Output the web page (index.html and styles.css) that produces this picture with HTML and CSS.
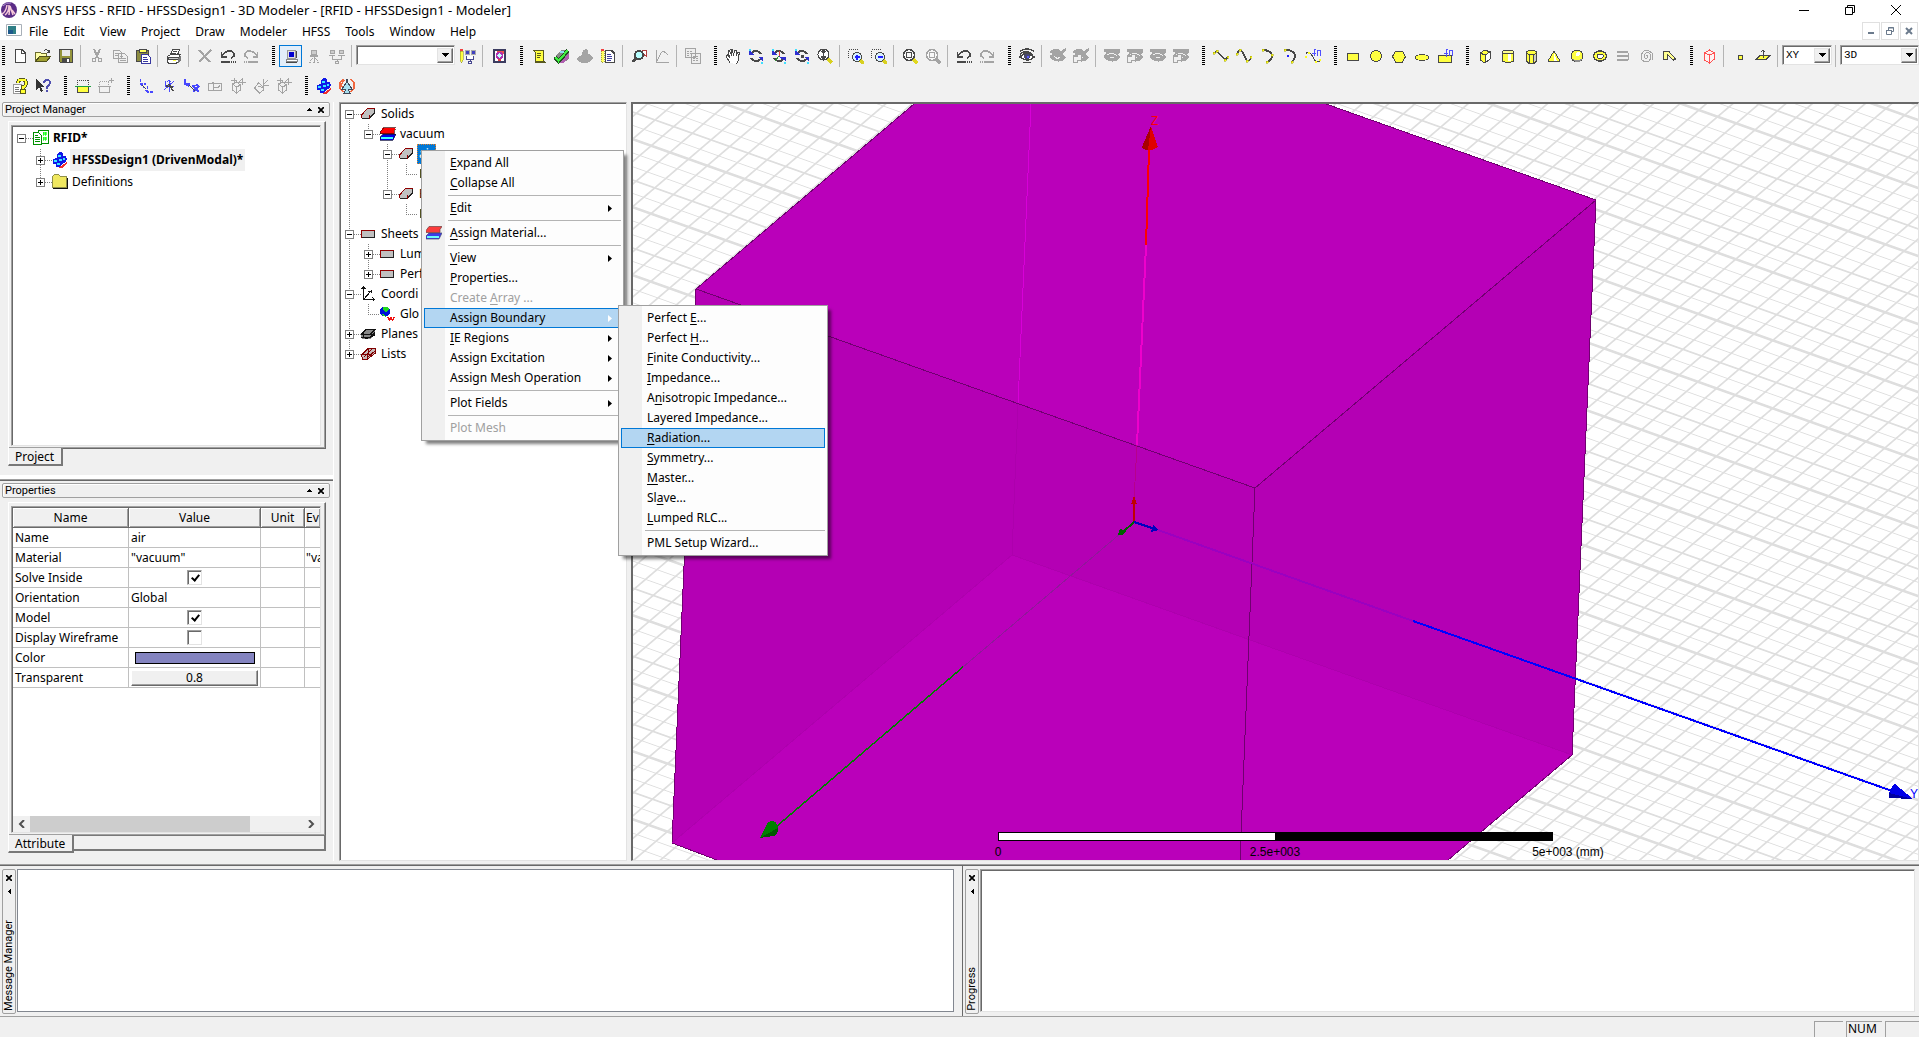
FILE: index.html
```html
<!DOCTYPE html>
<html lang="en">
<head>
<meta charset="utf-8">
<title>ANSYS HFSS - RFID - HFSSDesign1 - 3D Modeler</title>
<link rel="stylesheet" href="styles.css">
</head>
<body>
<svg class="sprite" aria-hidden="true">
  <symbol id="new" viewBox="0 0 16 16"><path d="M3 1.500h7l3 3v10h-10z" fill="#fff" stroke="#484848"/><path d="M9.500 1.500v3.500h3.500" fill="none" stroke="#484848"/></symbol>
  <symbol id="open" viewBox="0 0 16 16"><path d="M.500 13.500v-9h5l1 1h5v3" fill="#ffffa8" stroke="#6b6b30"/><path d="M.500 13.500l4-5h11l-4 5z" fill="#a0a030" stroke="#50501c"/><path d="M9 3q3-3 5 1m0-2v2.500h-2.500" fill="none" stroke="#484848"/></symbol>
  <symbol id="save" viewBox="0 0 16 16"><path d="M1.500 1.500h13v13h-12l-1-1z" fill="#94943c" stroke="#484848"/><path d="M4 2h8v6h-8z" fill="#e8e8e8"/><path d="M4 10h8v4h-8z" fill="#484848"/><path d="M9 11h2v3h-2z" fill="#fff"/></symbol>
  <symbol id="cut" viewBox="0 0 16 16"><path d="M5 1l4 9M11 1l-4 9" fill="none" stroke="currentColor" stroke-width="2"/><circle cx="5" cy="12" r="2" fill="none" stroke="currentColor"/><circle cx="11" cy="12" r="2" fill="none" stroke="currentColor"/></symbol>
  <symbol id="copy" viewBox="0 0 16 16"><path d="M1.500 2.500h6l2 2v6h-8zM6.500 5.500h6l3 3v6h-9z" fill="#f0f0f0" stroke="currentColor"/><path d="M3 5.500h3M3 7.500h3M8 8.500h3M8 10.500h6M8 12.500h6" stroke="currentColor"/></symbol>
  <symbol id="paste" viewBox="0 0 16 16"><path d="M1.500 2.500h12v11h-12z" fill="#8c8c40" stroke="#484848"/><path d="M4 1h7v3h-7z" fill="#ffff60" stroke="#484848"/><path d="M6.500 6.500h6l3 3v6h-9z" fill="#fff" stroke="#3838a0"/><path d="M8 9.500h4M8 11.500h5M8 13.500h5" stroke="#3838a0"/></symbol>
  <symbol id="print" viewBox="0 0 16 16"><path d="M4.500 7l2-5.500h7l-2 5.500M1.500 8.500l3-2h10l-2 3v4l-2 1.500h-8l-1-1z" fill="#fff" stroke="#484848"/><path d="M2 9.500h10v2h-10z" fill="#ccc" stroke="#484848"/><path d="M12 10l3-2v4l-3 3z" fill="#777"/><path d="M7 3.500h4M6 5.500h4" stroke="#484848"/><path d="M7 12.500h3" stroke="#ffff40"/></symbol>
  <symbol id="del" viewBox="0 0 16 16"><path d="M2 2l11 12M14 2l-12 12" stroke="currentColor" stroke-width="2"/></symbol>
  <symbol id="undo" viewBox="0 0 16 16"><path d="M1.500 4v5h5M2 8q4-6 9-5q4 2 3 5l-3 2.500" fill="none" stroke="currentColor" stroke-width="1.500"/><path d="M1 14h9" stroke="currentColor" stroke-width="2"/><path d="M11 14h5" stroke="currentColor" stroke-width="2" stroke-dasharray="1"/></symbol>
  <symbol id="redo" viewBox="0 0 16 16"><path d="M14.500 4v5h-5M14 8q-4-6-9-5q-4 2-3 5l3 2.500" fill="none" stroke="currentColor" stroke-width="1.500"/><path d="M6 14h9" stroke="currentColor" stroke-width="2"/><path d="M1 14h5" stroke="currentColor" stroke-width="2" stroke-dasharray="1"/></symbol>
  <symbol id="pc" viewBox="0 0 16 16"><path d="M4.500 2.500h8v8h-8z" fill="#e0e0e0" stroke="#999"/><path d="M6 4h5v5h-5z" fill="#0000d0"/><path d="M3 11.500h11v2h-11z" fill="#fff" stroke="#888"/><path d="M3 14.500h11M13.500 3v7" stroke="#484848"/></symbol>
  <symbol id="pcnet" viewBox="0 0 16 16"><path d="M5.500 2.500h5v4h-5z" fill="#ccc" stroke="currentColor"/><path d="M4 8h8" stroke="currentColor" stroke-width="2"/><path d="M8 9v5M4 13l3-3M12 13l-3-3M3 14.500h2M7 14.500h2M11 14.500h2" stroke="currentColor"/></symbol>
  <symbol id="pcs" viewBox="0 0 16 16"><path d="M1.500 2.500h4v3h-4zM10.500 2.500h4v3h-4z" fill="#ccc" stroke="currentColor"/><path d="M0 7.500h6M9 7.500h7M3.500 8v3h9v-3M8 11v2M6.500 13.500h3v2h-3z" fill="none" stroke="currentColor"/></symbol>
  <symbol id="pencilpc" viewBox="0 0 16 16"><path d="M0 3h3v9l-1.500 3-1.500-3z" fill="#ffff40" stroke="#80802c" stroke-width=".5"/><path d="M0 1h3v2h-3z" fill="#f04040"/><path d="M5 2h4v4h-4zM11 2h4v4h-4z" fill="#4040c0" stroke="#aaa"/><path d="M6.500 8v3h7v-3M10 11v2M8.500 13.500h3v2h-3z" fill="#fff" stroke="#484890"/></symbol>
  <symbol id="queue" viewBox="0 0 16 16"><path d="M3 2h11v12h-11z" fill="#fff" stroke="#3c3c60" stroke-width="2"/><path d="M5 3h8v3z" fill="#f05050"/><circle cx="8.500" cy="7.500" r="3" fill="#c0ffff" stroke="#b030b0" stroke-width="1.500"/><path d="M7 11h3v2h-3z" fill="#e04040"/></symbol>
  <symbol id="scroll" viewBox="0 0 16 16"><path d="M2 2h11l-1 2v8l2 2h-10v-10z" fill="#ffff40" stroke="#585820"/><path d="M6 5.500h4M6 7.500h4M6 9.500h3M5 13.500h8" stroke="#585820"/></symbol>
  <symbol id="check" viewBox="0 0 16 16"><path d="M2 8l5-6h6l2 3v6l-6 4-6-1z" fill="#888"/><path d="M9 11l6-5v4l-6 5h-4z" fill="#b060b0"/><path d="M6 3h6v2h-6z" fill="#90e0f0"/><path d="M1 9l3.500 4.500 9.500-11" fill="none" stroke="#205020" stroke-width="4"/><path d="M1.500 9l3 4 9-10.500" fill="none" stroke="#40f040" stroke-width="2"/></symbol>
  <symbol id="cloud" viewBox="0 0 16 16"><path d="M6 2l3-1 2 2v3l3 1 2 3-3 4-4 1h-4l-4-2-1-3 2-2 3-1z" fill="currentColor"/></symbol>
  <symbol id="notes" viewBox="0 0 16 16"><path d="M1 2h3v12h-3z" fill="#ffff60" stroke="#a0a040" stroke-dasharray="1"/><path d="M1 1h3v2h-3z" fill="#f04040"/><path d="M5.500 2.500h6l3 3v9h-9z" fill="#fff" stroke="#484848" stroke-width="1.500"/><path d="M7 6.500h4M7 8.500h5M7 10.500h5M7 12.500h4" stroke="#4040a0"/></symbol>
  <symbol id="lens" viewBox="0 0 16 16"><path d="M11 2h4v6l-3-2z" fill="#fff" stroke="#b04040"/><circle cx="8" cy="7" r="4" fill="#b8ffff" stroke="#484848" stroke-width="2"/><path d="M5 10l-3 4" stroke="#484848" stroke-width="3"/></symbol>
  <symbol id="plot" viewBox="0 0 16 16"><path d="M2.500 2v12.500h12M3 13l4-8q3-3 6 1l1 1" fill="none" stroke="currentColor"/></symbol>
  <symbol id="sheets" viewBox="0 0 16 16"><path d="M.500.500h10v9h-10zM6.500 5.500h9v10h-9z" fill="#eee" stroke="currentColor"/><path d="M2 3h6M2 5h4M2 7h3M8 8h6M8 10h6M8 12h6" stroke="currentColor" stroke-dasharray="2 1"/></symbol>
  <symbol id="hand" viewBox="0 0 16 16"><path d="M5 15l-4-7 1.500-1 2.500 3-2-7 1.500-.5 2 5-.5-6h1.500l1 6 1-5.500h1.500l0 6 2-4h1.500l-1 5v3l-2 4" fill="#fff" stroke="#484848"/></symbol>
  <symbol id="rot" viewBox="0 0 16 16"><path d="M4 5q4-5 9 1M12 11q-4 5-9-1" fill="none" stroke="#484848" stroke-width="2"/><path d="M1 2v5h5z" fill="#3030d0"/><path d="M15 14v-5h-5z" fill="#3030d0"/><path d="M1 2h2M13 14.500h2" stroke="#40e0ff" stroke-width="2"/></symbol>
  <symbol id="rotaxis" viewBox="0 0 16 16"><use href="#rot"/><path d="M8 3v5" stroke="#e04040"/><path d="M8 8l-4 5" stroke="#309030"/><path d="M8 8l5 4" stroke="#3030d0"/></symbol>
  <symbol id="rotdot" viewBox="0 0 16 16"><use href="#rot"/><path d="M7 7h3v3h-3z" fill="#484848"/></symbol>
  <symbol id="zoomud" viewBox="0 0 16 16"><circle cx="6.500" cy="6.500" r="5.500" fill="#fff" stroke="#484848"/><path d="M6.500 2.500v8M4.500 4.500l2-2 2 2M4.500 8.500l2 2 2-2" fill="none" stroke="#484848" stroke-width="1.500"/><path d="M11 11l4 4" stroke="#d8d020" stroke-width="3"/></symbol>
  <symbol id="zoomin" viewBox="0 0 16 16"><path d="M.500 9.500v-8h10" fill="none" stroke="#484848" stroke-dasharray="1"/><circle cx="9" cy="9" r="4.500" fill="#d8f0ff" stroke="#484848"/><path d="M6.500 9h5M9 6.500v5" stroke="#2020ff" stroke-width="2"/><path d="M12.500 12.500l3 3" stroke="#d8d020" stroke-width="3"/></symbol>
  <symbol id="zoomout" viewBox="0 0 16 16"><path d="M.500 9.500v-8h10" fill="none" stroke="#484848" stroke-dasharray="1"/><circle cx="9" cy="9" r="4.500" fill="#d8f0ff" stroke="#484848"/><path d="M6.500 9h5" stroke="#2020ff" stroke-width="2"/><path d="M12.500 12.500l3 3" stroke="#d8d020" stroke-width="3"/></symbol>
  <symbol id="fit" viewBox="0 0 16 16"><circle cx="7" cy="7" r="5.500" fill="#f8f8f8" stroke="currentColor" stroke-width="1.500"/><path d="M4.500 4.500h5v5h-5z" fill="none" stroke="currentColor"/><path d="M11.500 11.500l4 4" stroke="var(--handle)" stroke-width="3"/></symbol>
  <symbol id="eye" viewBox="0 0 16 16"><path d="M1 3q7-4 14 0M1 6q7-5 13 1" fill="none" stroke="#484848" stroke-width="1.500"/><path d="M1 9q6-7 14 0q-6 6-14 0z" fill="#fff" stroke="#484848" stroke-width="1.500"/><circle cx="8" cy="8.500" r="3" fill="#484870"/><path d="M8 8h2v2h-2z" fill="#6060ff"/><path d="M4 14h8" stroke="#484848"/></symbol>
  <symbol id="eyeoff" viewBox="0 0 16 16"><path d="M0 3q7-4 11 0l5-3v2l-4 4q4 2 4 4q-7 7-16 0v-3l3-1-3-1z" fill="currentColor"/><path d="M4 8q3 4 6 1" fill="none" stroke="#f0f0f0"/></symbol>
  <symbol id="eyeoff2" viewBox="0 0 16 16"><use href="#eyeoff"/><path d="M.500 8.500h4v-2h4v6h-4v2h-4z" fill="#f0f0f0" stroke="currentColor"/></symbol>
  <symbol id="eyeg" viewBox="0 0 16 16"><path d="M0 1h16v3l-2 2q2 2 2 4q-7 7-16 0v-3l3-2-3-1z" fill="currentColor"/><path d="M3 7q5-4 10 1M6 9h4" fill="none" stroke="#f0f0f0"/></symbol>
  <symbol id="eyeg2" viewBox="0 0 16 16"><use href="#eyeg"/><path d="M.500 8.500h4v-2h4v6h-4v2h-4z" fill="#f0f0f0" stroke="currentColor"/></symbol>
  <symbol id="line" viewBox="0 0 16 16"><path d="M1 5l3-2 8 9 3-3" fill="none" stroke="#484848" stroke-width="1.500"/><path d="M0 4h2v2h-2zM3 2h2v2h-2zM11 11h2v2h-2zM14 8h2v2h-2z" fill="#ffff20" stroke="#a0a000" stroke-width=".5"/></symbol>
  <symbol id="spline" viewBox="0 0 16 16"><path d="M1 6q3-7 6-1t4 8q3 0 4-4" fill="none" stroke="#484848" stroke-width="1.500"/><path d="M0 5h2v2h-2zM3 1h2v2h-2zM10 12h2v2h-2zM14 8h2v2h-2z" fill="#ffff20" stroke="#a0a000" stroke-width=".5"/></symbol>
  <symbol id="arc3" viewBox="0 0 16 16"><path d="M5 2q8 1 8 6 0 4-5 6" fill="none" stroke="#484848" stroke-width="2"/><path d="M3 1h2v2h-2zM12 6h2v2h-2zM7 13h2v2h-2z" fill="#ffff20" stroke="#a0a000" stroke-width=".5"/></symbol>
  <symbol id="arcc" viewBox="0 0 16 16"><path d="M4 2q9 0 9 7l-2 4" fill="none" stroke="#484848" stroke-width="2"/><path d="M2 1h2v2h-2zM9 13h2v2h-2z" fill="#ffff20" stroke="#a0a000" stroke-width=".5"/><path d="M5 7h2v2h-2z" fill="#2020ff"/></symbol>
  <symbol id="eqn" viewBox="0 0 16 16"><path d="M1 6q2-4 5 0l5 8 4-1" fill="none" stroke="#484848"/><path d="M0 8h2v2h-2zM3 4h2v2h-2zM10 13h2v2h-2zM14 11h2v2h-2z" fill="#ffff20"/><path d="M9 8v-6q0-1 2-1M7 5h4M12 8v-6h3v6" fill="none" stroke="#5050ff"/></symbol>
  <symbol id="rect" viewBox="0 0 16 16"><path d="M2.500 5.500h11v7h-11z" fill="#ffff40" stroke="#484848"/></symbol>
  <symbol id="circ" viewBox="0 0 16 16"><circle cx="8" cy="8" r="5.500" fill="#ffff40" stroke="#484848"/></symbol>
  <symbol id="hex" viewBox="0 0 16 16"><path d="M4.500 3.500h7l3 5-3 5.500h-7l-3-5.500z" fill="#ffff40" stroke="#484848"/></symbol>
  <symbol id="ell" viewBox="0 0 16 16"><ellipse cx="8" cy="9.500" rx="6.500" ry="3" fill="#ffff40" stroke="#484848"/></symbol>
  <symbol id="eqs" viewBox="0 0 16 16"><path d="M1.500 7.500h13v7h-13z" fill="#ffff40" stroke="#484848"/><path d="M9 9v-7q0-1 2-1M7 5h4M12 8v-6h3v6" fill="none" stroke="#5050ff"/></symbol>
  <symbol id="box" viewBox="0 0 16 16"><path d="M3 5l5-3 5 2v7l-5 4-5-3z" fill="#ffff40" stroke="#484848"/><path d="M8 7l5-3v7l-5 4z" fill="#fff" stroke="#484848"/><path d="M3 5l5 2" stroke="#484848"/></symbol>
  <symbol id="cyl" viewBox="0 0 16 16"><path d="M2.500 4v9q5.500 3 11 0v-9z" fill="#ffff40" stroke="#484848"/><path d="M8 6h3v7h-3z" fill="#fff"/><ellipse cx="8" cy="4" rx="5.500" ry="2" fill="#ffff90" stroke="#484848"/></symbol>
  <symbol id="prism" viewBox="0 0 16 16"><path d="M3.500 5v8l2 2h6l2-2v-8z" fill="#ffff40" stroke="#484848"/><path d="M6 7v8M10 7v8" stroke="#484848"/><path d="M10.500 7h2v6h-2z" fill="#ccc"/><ellipse cx="8.500" cy="4.500" rx="5" ry="2" fill="#ffff40" stroke="#484848"/></symbol>
  <symbol id="cone" viewBox="0 0 16 16"><path d="M8 3l6 10q-6 2-12 0z" fill="#ffff40" stroke="#484848"/><path d="M8 5l3 8h-3z" fill="#fff"/></symbol>
  <symbol id="ball" viewBox="0 0 16 16"><circle cx="8" cy="8" r="6" fill="#ffff40" stroke="#484848"/><circle cx="9" cy="6" r="2" fill="#fff"/><path d="M3 11q5 2 10 0l-3 3h-4z" fill="#909090"/></symbol>
  <symbol id="torus" viewBox="0 0 16 16"><ellipse cx="8" cy="8" rx="6.500" ry="5" fill="#ffff40" stroke="#484848" stroke-width="1.500"/><rect x="5" y="6" width="6" height="4" rx="1" fill="#fff" stroke="#484848"/></symbol>
  <symbol id="helix" viewBox="0 0 16 16"><path d="M2 4h11M2 8h12M2 12h11" stroke="currentColor" stroke-width="2.500"/><path d="M12 4l2 2-2 2M13 9l1 2-2 1" stroke="currentColor" fill="none"/></symbol>
  <symbol id="spiral" viewBox="0 0 16 16"><path d="M8 8q2-2 2 1-2 3-4 0 0-5 5-4 4 4 0 8-6 2-8-3 0-8 7-8l4 3v7" fill="none" stroke="currentColor"/></symbol>
  <symbol id="bond" viewBox="0 0 16 16"><path d="M2.500 11v-8h5l7 8-2 1-6-5v4z" fill="#ffff90" stroke="#484848"/></symbol>
  <symbol id="region" viewBox="0 0 16 16"><path d="M3.500 5l5-3 5 3v6l-5 4-5-3zM3.500 5l5 2 5-2M8.500 7v8" fill="#fff0f0" stroke="#ff5050"/></symbol>
  <symbol id="point" viewBox="0 0 16 16"><path d="M6 7h4v4h-4z" fill="#ffff40" stroke="#484848"/></symbol>
  <symbol id="plane" viewBox="0 0 16 16"><path d="M1 11.500l4-4h10l-4 4z" fill="#ffff40" stroke="#484848"/><path d="M8 10v-8M6 4l2-2 2 2" fill="none" stroke="#484848"/></symbol>
  <symbol id="help" viewBox="0 0 16 16"><path d="M1.500 6.500h8v9h-8z" fill="#fff" stroke="#999"/><path d="M3 9h4M3 11h4M3 13h5" stroke="#777"/><path d="M6 5q0-3.500 4-3.500t4 3.500-3 4v2M10 13h2v2h-2z" fill="none" stroke="#585820" stroke-width="3.500"/><path d="M6 5q0-3.500 4-3.500t4 3.500-3 4v2M10 13h2v1h-2z" fill="none" stroke="#ffff30" stroke-width="2"/></symbol>
  <symbol id="what" viewBox="0 0 16 16"><path d="M1 1v11l3-3 2 5 2-1-2-4h4z" fill="#333"/><path d="M9 5q0-3 3-3t3 2.500-3 4v2M12 12v2" fill="none" stroke="#5050b0" stroke-width="2"/></symbol>
  <symbol id="sect" viewBox="0 0 16 16"><path d="M2.500 7v-5h11v5" fill="none" stroke="#484848" stroke-dasharray="1"/><path d="M2.500 8.500h11v6h-11z" fill="#ffff40" stroke="#484848"/><path d="M0 8.500h16" stroke="#20a040"/></symbol>
  <symbol id="sectg" viewBox="0 0 16 16"><path d="M1.500 7v-4h9v4" fill="none" stroke="currentColor" stroke-dasharray="1"/><path d="M1.500 8.500h10v6h-10zM0 8.500h13M13.500 0v5M11 2.500h5" fill="none" stroke="currentColor"/></symbol>
  <symbol id="cs1" viewBox="0 0 16 16"><path d="M2.500 1v5h5M2.500 6l4 4M9.500 8v6h6M9.500 14l-3-3" fill="none" stroke="#4848ff" stroke-width="1.500" stroke-dasharray="3 1"/><path d="M4 7l4 4" stroke="#484848"/></symbol>
  <symbol id="cs2" viewBox="0 0 16 16"><path d="M8.500 2v12M4 3v5h9M3 12l10-9M6 4l2-2 2 2" fill="none" stroke="#4848ff"/><path d="M5 8l7 1M8 6l4 7" stroke="#484848" stroke-width="1.500"/></symbol>
  <symbol id="cs3" viewBox="0 0 16 16"><path d="M1 1v5h5M1 6l4 2M8 8l6-1M9 14l6-6M10 9l5 5" fill="none" stroke="#4848ff" stroke-width="1.500"/><path d="M5 7l6 6" stroke="#484848"/></symbol>
  <symbol id="csg" viewBox="0 0 16 16"><path d="M1.500 5.500h13v7h-13zM6.500 13v-9M6 9.500h5l2-2M4 6l2-2 2 2" fill="none" stroke="currentColor"/></symbol>
  <symbol id="csg2" viewBox="0 0 16 16"><path d="M2.500 6l4-2 4 3v5l-4 3-4-3zM2.500 6l4 3 4-2M6.500 9v6M8 5l4-4M12.500 0v7M9 4.500h7M4.500 0v4M1 2.500h6" fill="none" stroke="currentColor"/></symbol>
  <symbol id="csg3" viewBox="0 0 16 16"><path d="M1.500 10l4-5 5 4v3l-4 3zM5 8l6 2M10.500 1v6h6M10 7l5-5" fill="none" stroke="currentColor"/></symbol>
  <symbol id="cubes" viewBox="0 0 16 16"><path d="M9 14l6-4v2l-5 4h-4z" fill="#f03030"/><path d="M5 2l3-2 3 1v3l3 0 1 3-1 3-4 2-2 3h-4v-3h-3v-5l4-1z" fill="#1018e8"/><path d="M6 3h3v2h-3zM2 8h3v2h-3zM7 7h3v2h-3zM5 11h3v2h-3zM11 6h2v2h-2z" fill="#38e8ff"/></symbol>
  <symbol id="plane3" viewBox="0 0 16 16"><path d="M4 1l-3 4v5l3 4M12 1l3 4v5l-3 4M5 2l-3 5 3 5" fill="none" stroke="#f06840" stroke-width="1.500"/><path d="M8 1l1 4 4 6h-4l2 4h-6l2-4h-4l4-6z" fill="#a8e0f0" stroke="#404858"/></symbol>
  <symbol id="project" viewBox="0 0 16 16"><path d="M5 .500h10v13h-10z" fill="#fff" stroke="#009000"/><path d="M10 2h1v3h-1zM12 2h1v3h-1zM10 7h1v3h-1zM12 7h1v3h-1z" fill="#20ff20" stroke="#20ff20" stroke-width=".7"/><path d="M.500 2.500h5l3 3v9h-8z" fill="#fff" stroke="#009000"/><path d="M2 5.500h3M2 7.500h5M2 9.500h5M2 11.500h5" stroke="#009000"/></symbol>
  <symbol id="folder" viewBox="0 0 16 16"><path d="M.500 13.500v-11l2-2h4l2 2h6v11z" fill="#f0e860" stroke="#909048"/><path d="M1 14.500h14.500v-11" fill="none" stroke="#111"/></symbol>
  <symbol id="solid" viewBox="0 0 16 16"><path d="M.500 9.500l6-6.500h7v4l-5.500 5.500h-7.500z" fill="#c0c0c0"/><path d="M.500 12.500h7.500l5.500-5.500v-4.500" fill="none" stroke="#222"/><path d="M.500 12v-3l6-6.500h7M8.500 9v3.500" fill="none" stroke="#900000"/></symbol>
  <symbol id="mat" viewBox="0 0 16 16"><path d="M3 8h13l-2 4-1 2h-13v-3z" fill="#0000e8" stroke="#101040" stroke-width=".7"/><path d="M1 11h12v2h-12z" fill="#40ffff"/><path d="M3 1.500h13l-2 3v3h-14v-2z" fill="#ff0000" stroke="#400808" stroke-width=".7"/></symbol>
  <symbol id="sheet" viewBox="0 0 16 16"><path d="M.500 4.500h13v7h-13z" fill="#c0c0c0" stroke="#900000"/><path d="M13.500 5v6.500h-13" fill="none" stroke="#222"/></symbol>
  <symbol id="axes" viewBox="0 0 16 16"><path d="M2.500 1v12.500h11M3 13l7-8M.500 3l2-2 2 2M11.500 11.500l2 2-2 2M10 4v3M7 5.500h3" fill="none" stroke="#111"/></symbol>
  <symbol id="globe" viewBox="0 0 16 16"><circle cx="5" cy="5.500" r="5" fill="#0010d8"/><path d="M3 1h4l2 2-3 3-3-2zM2 8l3 1 1 2-3-1z" fill="#20d820"/><path d="M8 11l1.500 3 1.500-2 1.500 2 2-3" fill="none" stroke="#f01010" stroke-width="1.500"/></symbol>
  <symbol id="planes" viewBox="0 0 16 16"><path d="M0 8l5-5h9v6l-5 4h-8z" fill="#888"/><path d="M0 8.500h9l5-5h-9zM0 11.500h9l5-5M0 8l14 0M4 13l10-4M2.500 5v7" fill="none" stroke="#111"/></symbol>
  <symbol id="lists" viewBox="0 0 16 16"><path d="M.500 9l7-7h7v5l-8 6h-5z" fill="#c8b8b8" stroke="#800000"/><path d="M3 11l8-8M6 12l8-7M7.500 3v5l4 2M2 8.500h4v5" fill="none" stroke="#800000"/></symbol>
  <symbol id="cmd" viewBox="0 0 16 16"><path d="M2 3h12v9h-12z" fill="#505020"/></symbol>
  <symbol id="tri-up" viewBox="0 0 5 3"><path d="M2 0h1v1h1v1h1v1h-5v-1h1v-1h1z"/></symbol>
  <symbol id="tri-left" viewBox="0 0 3 5"><path d="M0 2h1v-1h1v-1h1v5h-1v-1h-1v-1h-1z"/></symbol>
  <symbol id="x" viewBox="0 0 7 7"><path d="M0 0l7 7M7 0l-7 7" stroke="#000" stroke-width="2"/></symbol>
  <symbol id="drop" viewBox="0 0 7 4"><path d="M0 0h7v1h-1v1h-1v1h-1v1h-1v-1h-1v-1h-1v-1h-1z"/></symbol>
  <symbol id="sub" viewBox="0 0 4 7"><path d="M0 0l4 3.500-4 3.500z"/></symbol>
</svg>

<header class="titlebar">
  <svg class="logo" viewBox="0 0 16 16"><circle cx="8" cy="8" r="8" fill="#5a2c86"/><path d="M1 12q4-2 5-9M4 13q4-3 4-10M8 13l1-9 3 9M11 8l3 4" fill="none" stroke="#f4c8d8" stroke-width="1.500"/><path d="M2 4q3-4 8-3" fill="none" stroke="#b090d0"/></svg>
  <h1>ANSYS HFSS - RFID - HFSSDesign1 - 3D Modeler - [RFID - HFSSDesign1 - Modeler]</h1>
  <div class="winbtns">
    <button aria-label="Minimize"><svg viewBox="0 0 12 12"><path d="M1 6.500h10" stroke="#000"/></svg></button>
    <button aria-label="Restore"><svg viewBox="0 0 12 12"><path d="M1.500 3.500h7v7h-7zM3.500 3v-1.500h7v7h-2" fill="none" stroke="#000"/></svg></button>
    <button aria-label="Close"><svg viewBox="0 0 12 12"><path d="M1 1l10 10M11 1l-10 10" stroke="#000"/></svg></button>
  </div>
</header>
<nav class="menubar" aria-label="Main menu">
  <svg class="docicon" viewBox="0 0 16 12"><path d="M.500.500h15v11h-15z" fill="#fff" stroke="#a8b0b8"/><path d="M2 2h8v8h-8z" fill="#2f7f86"/><path d="M2 6h5v4h-5z" fill="#1e5a8c"/></svg>
  <button>File</button><button>Edit</button><button>View</button><button>Project</button><button>Draw</button><button>Modeler</button><button>HFSS</button><button>Tools</button><button>Window</button><button>Help</button>
  <div class="mdibtns">
    <button aria-label="Minimize document"><svg viewBox="0 0 8 8"><path d="M1 6h6" stroke="#6b7a8c" stroke-width="2"/></svg></button>
    <button aria-label="Restore document"><svg viewBox="0 0 8 8"><path d="M.500 3.500h5v4h-5zM2.500 3v-2.500h5v4h-2M0 3.500h6M2 1h6" fill="none" stroke="#6b7a8c"/></svg></button>
    <button aria-label="Close document"><svg viewBox="0 0 8 8"><path d="M1 1l6 6M7 1l-6 6" stroke="#6b7a8c" stroke-width="2"/></svg></button>
  </div>
</nav>

<div class="toolbars">
  <div class="toolbar" role="toolbar" aria-label="Standard">
    <i class="grip first"></i>
    <button aria-label="New"><svg><use href="#new"/></svg></button><button aria-label="Open"><svg><use href="#open"/></svg></button><button aria-label="Save"><svg><use href="#save"/></svg></button>
    <i class="sep"></i>
    <button disabled aria-label="Cut"><svg><use href="#cut"/></svg></button><button disabled aria-label="Copy"><svg><use href="#copy"/></svg></button><button aria-label="Paste"><svg><use href="#paste"/></svg></button>
    <i class="sep"></i>
    <button aria-label="Print"><svg><use href="#print"/></svg></button>
    <i class="sep"></i>
    <button disabled aria-label="Delete"><svg><use href="#del"/></svg></button><button aria-label="Undo"><svg><use href="#undo"/></svg></button><button disabled aria-label="Redo"><svg><use href="#redo"/></svg></button>
    <i class="grip"></i>
    <button class="on" aria-label="Local machine"><svg><use href="#pc"/></svg></button><button disabled aria-label="Remote machine"><svg><use href="#pcnet"/></svg></button><button disabled aria-label="Distributed"><svg><use href="#pcs"/></svg></button>
    <i class="sep"></i>
    <div class="combo machines"><select aria-label="Machine list"><option></option></select><span><svg><use href="#drop"/></svg></span></div>
    <button aria-label="Edit machines"><svg><use href="#pencilpc"/></svg></button>
    <i class="sep"></i>
    <button aria-label="Queue"><svg><use href="#queue"/></svg></button>
    <i class="grip"></i>
    <button aria-label="Scripts"><svg><use href="#scroll"/></svg></button><button aria-label="Validate"><svg><use href="#check"/></svg></button><button disabled aria-label="Analyze"><svg><use href="#cloud"/></svg></button><button aria-label="Notes"><svg><use href="#notes"/></svg></button>
    <i class="sep"></i>
    <button aria-label="Solution data"><svg><use href="#lens"/></svg></button><button disabled aria-label="Report"><svg><use href="#plot"/></svg></button>
    <i class="sep"></i>
    <button disabled aria-label="Copy image"><svg><use href="#sheets"/></svg></button>
    <i class="grip"></i>
    <button aria-label="Pan"><svg><use href="#hand"/></svg></button><button aria-label="Rotate"><svg><use href="#rot"/></svg></button><button aria-label="Rotate about axis"><svg><use href="#rotaxis"/></svg></button><button aria-label="Rotate about center"><svg><use href="#rotdot"/></svg></button><button aria-label="Dynamic zoom"><svg><use href="#zoomud"/></svg></button>
    <i class="sep"></i>
    <button aria-label="Zoom in"><svg><use href="#zoomin"/></svg></button><button aria-label="Zoom out"><svg><use href="#zoomout"/></svg></button>
    <i class="sep"></i>
    <button aria-label="Fit all"><svg><use href="#fit"/></svg></button><button disabled aria-label="Fit selection"><svg><use href="#fit"/></svg></button>
    <i class="sep"></i>
    <button aria-label="Undo view"><svg><use href="#undo"/></svg></button><button disabled aria-label="Redo view"><svg><use href="#redo"/></svg></button>
    <i class="grip"></i>
    <button aria-label="Visibility"><svg><use href="#eye"/></svg></button>
    <i class="sep"></i>
    <button disabled aria-label="Hide"><svg><use href="#eyeoff"/></svg></button><button disabled aria-label="Hide in active view"><svg><use href="#eyeoff2"/></svg></button>
    <i class="sep"></i>
    <button disabled aria-label="Show"><svg><use href="#eyeg"/></svg></button><button disabled aria-label="Show in view"><svg><use href="#eyeg2"/></svg></button><button disabled aria-label="Show all"><svg><use href="#eyeg"/></svg></button><button disabled aria-label="Show all in view"><svg><use href="#eyeg2"/></svg></button>
    <i class="grip"></i>
    <button aria-label="Line"><svg><use href="#line"/></svg></button><button aria-label="Spline"><svg><use href="#spline"/></svg></button><button aria-label="Three point arc"><svg><use href="#arc3"/></svg></button><button aria-label="Center arc"><svg><use href="#arcc"/></svg></button><button aria-label="Equation curve"><svg><use href="#eqn"/></svg></button>
    <i class="grip"></i>
    <button aria-label="Rectangle"><svg><use href="#rect"/></svg></button><button aria-label="Circle"><svg><use href="#circ"/></svg></button><button aria-label="Polygon"><svg><use href="#hex"/></svg></button><button aria-label="Ellipse"><svg><use href="#ell"/></svg></button><button aria-label="Equation surface"><svg><use href="#eqs"/></svg></button>
    <i class="grip"></i>
    <button aria-label="Box"><svg><use href="#box"/></svg></button><button aria-label="Cylinder"><svg><use href="#cyl"/></svg></button><button aria-label="Polyhedron"><svg><use href="#prism"/></svg></button><button aria-label="Cone"><svg><use href="#cone"/></svg></button><button aria-label="Sphere"><svg><use href="#ball"/></svg></button><button aria-label="Torus"><svg><use href="#torus"/></svg></button><button disabled aria-label="Helix"><svg><use href="#helix"/></svg></button><button disabled aria-label="Spiral"><svg><use href="#spiral"/></svg></button><button aria-label="Bondwire"><svg><use href="#bond"/></svg></button>
    <i class="grip"></i>
    <button aria-label="Region"><svg><use href="#region"/></svg></button>
    <i class="sep"></i>
    <button aria-label="Point"><svg><use href="#point"/></svg></button><button aria-label="Plane"><svg><use href="#plane"/></svg></button>
    <i class="sep"></i>
    <div class="combo drawplane"><select aria-label="Drawing plane"><option>XY</option></select><span><svg><use href="#drop"/></svg></span></div>
    <i class="sep"></i>
    <div class="combo movement"><select aria-label="Movement mode"><option>3D</option></select><span><svg><use href="#drop"/></svg></span></div>
  </div>
  <div class="toolbar" role="toolbar" aria-label="Modeler">
    <i class="grip first"></i>
    <button aria-label="Help topics"><svg><use href="#help"/></svg></button><button aria-label="Context help"><svg><use href="#what"/></svg></button>
    <i class="grip"></i>
    <button aria-label="Section"><svg><use href="#sect"/></svg></button><button disabled aria-label="Add section"><svg><use href="#sectg"/></svg></button>
    <i class="grip"></i>
    <button aria-label="Offset CS"><svg><use href="#cs1"/></svg></button><button aria-label="Rotated CS"><svg><use href="#cs2"/></svg></button><button aria-label="Relative CS"><svg><use href="#cs3"/></svg></button><button disabled aria-label="Face CS"><svg><use href="#csg"/></svg></button><button disabled aria-label="Object CS"><svg><use href="#csg2"/></svg></button><button disabled aria-label="Object CS rotated"><svg><use href="#csg3"/></svg></button><button disabled aria-label="Object CS both"><svg><use href="#csg2"/></svg></button>
    <i class="grip"></i>
    <button aria-label="HFSS design"><svg><use href="#cubes"/></svg></button><button aria-label="HFSS-IE design"><svg><use href="#plane3"/></svg></button>
  </div>
</div>

<main class="workspace">
  <aside class="docks">
    <section class="panel project">
      <div class="caption"><h2>Project Manager</h2><button aria-label="Collapse project manager"><svg class="tri"><use href="#tri-up"/></svg></button><button aria-label="Close project manager"><svg class="x"><use href="#x"/></svg></button></div>
      <div class="tabframe">
        <div class="well">
          <ul class="tree roomy">
            <li><div class="row"><button class="exp open" aria-label="Collapse"></button><i class="dots"></i><svg><use href="#project"/></svg><span class="label strong">RFID*</span></div>
              <ul>
                <li><div class="row"><button class="exp" aria-label="Expand"></button><i class="dots"></i><svg><use href="#cubes"/></svg><span class="label strong shaded">HFSSDesign1 (DrivenModal)*</span></div></li>
                <li><div class="row"><button class="exp" aria-label="Expand"></button><i class="dots"></i><svg><use href="#folder"/></svg><span class="label">Definitions</span></div></li>
              </ul>
            </li>
          </ul>
        </div>
      </div>
      <div class="tabs"><button class="tab">Project</button></div>
    </section>
    <section class="panel properties">
      <div class="caption"><h2>Properties</h2><button aria-label="Collapse properties"><svg class="tri"><use href="#tri-up"/></svg></button><button aria-label="Close properties"><svg class="x"><use href="#x"/></svg></button></div>
      <div class="tabframe">
        <div class="well">
          <div class="tablewrap">
            <table>
              <colgroup><col class="c-name"><col class="c-value"><col class="c-unit"><col class="c-eval"></colgroup>
              <thead><tr><th>Name</th><th>Value</th><th>Unit</th><th class="eval">Ev</th></tr></thead>
              <tbody>
                <tr><td>Name</td><td>air</td><td></td><td></td></tr>
                <tr><td>Material</td><td>"vacuum"</td><td></td><td>"va</td></tr>
                <tr><td><label for="solve">Solve Inside</label></td><td class="mid"><input type="checkbox" id="solve" checked></td><td></td><td></td></tr>
                <tr><td>Orientation</td><td>Global</td><td></td><td></td></tr>
                <tr><td><label for="model">Model</label></td><td class="mid"><input type="checkbox" id="model" checked></td><td></td><td></td></tr>
                <tr><td><label for="wire">Display Wireframe</label></td><td class="mid"><input type="checkbox" id="wire"></td><td></td><td></td></tr>
                <tr><td>Color</td><td class="mid"><button class="swatch" aria-label="Color"></button></td><td></td><td></td></tr>
                <tr><td>Transparent</td><td class="mid"><button class="raised">0.8</button></td><td></td><td></td></tr>
              </tbody>
            </table>
          </div>
          <div class="hscroll"><button aria-label="Scroll left"><svg viewBox="0 0 7 8"><path d="M6 0l-4 4 4 4" fill="none" stroke="#505050" stroke-width="2"/></svg></button><i class="thumb"></i><button aria-label="Scroll right"><svg viewBox="0 0 7 8"><path d="M1 0l4 4-4 4" fill="none" stroke="#505050" stroke-width="2"/></svg></button></div>
        </div>
      </div>
      <div class="tabs"><button class="tab">Attribute</button><i class="filler"></i></div>
    </section>
  </aside>

  <section class="history" aria-label="Model history">
    <ul class="tree">
      <li><div class="row"><button class="exp open" aria-label="Collapse"></button><i class="dots"></i><svg><use href="#solid"/></svg><span class="label">Solids</span></div>
        <ul><li><div class="row"><button class="exp open" aria-label="Collapse"></button><i class="dots"></i><svg><use href="#mat"/></svg><span class="label">vacuum</span></div>
          <ul>
            <li><div class="row"><button class="exp open" aria-label="Collapse"></button><i class="dots"></i><svg><use href="#solid"/></svg><span class="label selected">air</span></div>
              <ul><li><div class="row"><i class="dots leaf"></i><svg><use href="#cmd"/></svg></div></li></ul></li>
            <li><div class="row"><button class="exp open" aria-label="Collapse"></button><i class="dots"></i><svg><use href="#solid"/></svg><span class="label">Box</span></div>
              <ul><li><div class="row"><i class="dots leaf"></i><svg><use href="#cmd"/></svg></div></li></ul></li>
          </ul></li></ul></li>
      <li><div class="row"><button class="exp open" aria-label="Collapse"></button><i class="dots"></i><svg><use href="#sheet"/></svg><span class="label">Sheets</span></div>
        <ul>
          <li><div class="row"><button class="exp" aria-label="Expand"></button><i class="dots"></i><svg><use href="#sheet"/></svg><span class="label">Lum</span></div></li>
          <li><div class="row"><button class="exp" aria-label="Expand"></button><i class="dots"></i><svg><use href="#sheet"/></svg><span class="label">Perf</span></div></li>
        </ul></li>
      <li><div class="row"><button class="exp open" aria-label="Collapse"></button><i class="dots"></i><svg><use href="#axes"/></svg><span class="label">Coordi</span></div>
        <ul><li><div class="row"><i class="dots leaf"></i><svg><use href="#globe"/></svg><span class="label">Glo</span></div></li></ul></li>
      <li><div class="row"><button class="exp" aria-label="Expand"></button><i class="dots"></i><svg><use href="#planes"/></svg><span class="label">Planes</span></div></li>
      <li><div class="row"><button class="exp" aria-label="Expand"></button><i class="dots"></i><svg><use href="#lists"/></svg><span class="label">Lists</span></div></li>
    </ul>
  </section>

  <section class="view3d" aria-label="3D view">
    <svg viewBox="633 104 1285 756" preserveAspectRatio="xMinYMin slice">
      <defs>
        <pattern id="grid" width="100" height="100" patternUnits="userSpaceOnUse" patternTransform="matrix(.934 .332 .563 -.48 729.6 180.5)">
          <path d="M30 0v100M50 0v100M70 0v100M90 0v100" stroke="#dedede" stroke-width="1.100"/>
          <path d="M0 30h100M0 50h100M0 70h100M0 90h100" stroke="#dedede" stroke-width="1.400"/>
          <path d="M10 0v100" stroke="#dedede" stroke-width="2.200"/>
          <path d="M0 10h100" stroke="#dedede" stroke-width="3"/>
        </pattern>
      </defs>
      <path d="M633 104h1285v756h-1285z" fill="#fff"/>
      <path d="M633 104h1285v756h-1285z" fill="url(#grid)"/>
      <path d="M914 104H1326L1596 200L1572 755L1448 860H717L672 843L696 289z" fill="#b400b4"/>
      <path d="M914 104H1326L1596 200L1255 488L696 289z" fill="#ba00ba"/>
      <path d="M1012 555L672 843L717 860H1448L1572 755z" fill="#ba00ba"/>
      <path d="M1031 104L1018 404" stroke="#d800d8" fill="none"/>
      <path d="M1018 404L1012 555L672 843M1012 555L1572 755" stroke="#a800a8" fill="none" opacity=".6"/>
      <path d="M914 104L696 289L672 843L717 860M1326 104L1596 200L1572 755L1448 860" fill="none" stroke="#700070"/>
      <path d="M696 289L1255 488L1596 200M1255 488L1240 860" fill="none" stroke="#700070"/>
      <path d="M1134 522L963 667" stroke="#90189a" fill="none"/>
      <path d="M1158 530L1413 621" stroke="#9c00c0" stroke-width="2" fill="none"/>
      <path d="M1137 445L1134 500" stroke="#b8008c" fill="none"/>
      <path d="M1146 245L1137 445" stroke="#ee00cc" stroke-width="2" fill="none"/>
      <path d="M1149 150L1146 245" stroke="#ff0000" stroke-width="2" fill="none"/>
      <path d="M1151 126L1158 147Q1150 153 1142 147z" fill="#e00000"/><path d="M1151 126L1148 150Q1144 150 1142 147z" fill="#a80000"/>
      <path d="M963 667L777 826" stroke="#008000" stroke-width="1.500" fill="none"/>
      <path d="M760 838L768 822Q776 819 778 827Q778 835 774 836z" fill="#008000"/><path d="M760 838L778 828Q778 835 774 836z" fill="#005800"/>
      <path d="M1413 621L1892 791" stroke="#0000ff" stroke-width="2" fill="none"/>
      <path d="M1913 799L1895 784Q1888 789 1889 798z" fill="#0000e8"/><path d="M1913 799L1889 793V798z" fill="#0000a0"/>
      <path d="M1134 522V503" stroke="#c00000" stroke-width="2"/><path d="M1134 496L1137 504H1131z" fill="#c00000"/>
      <path d="M1134 522L1123 532" stroke="#006000" stroke-width="2"/><path d="M1118 535L1120 529L1126 531L1123 535z" fill="#006000"/>
      <path d="M1134 522L1152 528" stroke="#0000c0" stroke-width="2"/><path d="M1159 530L1151 532L1153 525z" fill="#0000c0"/>
      <text class="axis" x="1151" y="125" fill="#ff0000">Z</text>
      <text class="axis" x="1910" y="798" fill="#0000ff">Y</text>
      <path d="M998.500 832.500h554v8h-554z" fill="#fff" stroke="#000"/><path d="M1275 832h278v9h-278z"/>
      <g class="scale"><text x="998" y="856">0</text><text x="1275" y="856">2.5e+003</text><text x="1568" y="856">5e+003 (mm)</text></g>
    </svg>
  </section>
</main>

<footer class="output">
  <section class="outdock">
    <div class="vcaption"><button aria-label="Close messages"><svg class="x"><use href="#x"/></svg></button><button aria-label="Collapse messages"><svg class="tril"><use href="#tri-left"/></svg></button><h2>Message Manager</h2></div>
    <div class="outwell flat"></div>
  </section>
  <section class="outdock">
    <div class="vcaption"><button aria-label="Close progress"><svg class="x"><use href="#x"/></svg></button><button aria-label="Collapse progress"><svg class="tril"><use href="#tri-left"/></svg></button><h2>Progress</h2></div>
    <div class="outwell"></div>
  </section>
</footer>
<div class="status"><span class="cap"></span><span class="num">NUM</span><span class="scrl"></span></div>

<div class="menu context" role="menu">
  <button role="menuitem"><span><u>E</u>xpand All</span></button>
  <button role="menuitem"><span><u>C</u>ollapse All</span></button>
  <hr>
  <button role="menuitem"><span><u>E</u>dit</span><svg class="sub"><use href="#sub"/></svg></button>
  <hr>
  <button role="menuitem"><svg class="mi"><use href="#mat"/></svg><span><u>A</u>ssign Material...</span></button>
  <hr>
  <button role="menuitem"><span><u>V</u>iew</span><svg class="sub"><use href="#sub"/></svg></button>
  <button role="menuitem"><span><u>P</u>roperties...</span></button>
  <button role="menuitem" disabled><span>Create <u>A</u>rray ...</span></button>
  <button role="menuitem" class="hot"><span>Assign Boundary</span><svg class="sub"><use href="#sub"/></svg></button>
  <button role="menuitem"><span><u>I</u>E Regions</span><svg class="sub"><use href="#sub"/></svg></button>
  <button role="menuitem"><span>Assign Excitation</span><svg class="sub"><use href="#sub"/></svg></button>
  <button role="menuitem"><span>Assign Mesh Operation</span><svg class="sub"><use href="#sub"/></svg></button>
  <hr>
  <button role="menuitem"><span>Plot Fields</span><svg class="sub"><use href="#sub"/></svg></button>
  <hr>
  <button role="menuitem" disabled><span>Plot Mesh</span></button>
</div>
<div class="menu submenu" role="menu">
  <button role="menuitem"><span>Perfect <u>E</u>...</span></button>
  <button role="menuitem"><span>Perfect <u>H</u>...</span></button>
  <button role="menuitem"><span><u>F</u>inite Conductivity...</span></button>
  <button role="menuitem"><span><u>I</u>mpedance...</span></button>
  <button role="menuitem"><span>A<u>n</u>isotropic Impedance...</span></button>
  <button role="menuitem"><span>Layered Impedance...</span></button>
  <button role="menuitem" class="hot"><span><u>R</u>adiation...</span></button>
  <button role="menuitem"><span><u>S</u>ymmetry...</span></button>
  <button role="menuitem"><span><u>M</u>aster...</span></button>
  <button role="menuitem"><span>Sl<u>a</u>ve...</span></button>
  <button role="menuitem"><span><u>L</u>umped RLC...</span></button>
  <hr>
  <button role="menuitem"><span>PML Setup Wizard...</span></button>
</div>
</body>
</html>
```
FILE: styles.css
```css
* { box-sizing: border-box; }
body {
  margin: 0;
  height: 100vh;
  display: flex;
  flex-direction: column;
  overflow: hidden;
  background: #f0f0f0;
  color: #000;
  font: 12px/20px "Noto Sans", "Open Sans", sans-serif;
}
button { margin: 0; padding: 0; border: 0; background: none; font: inherit; color: inherit; }
svg { display: block; flex: none; }
h1, h2 { margin: 0; font-weight: normal; }
ul { margin: 0; padding: 0; list-style: none; }
.sprite { position: absolute; width: 0; height: 0; }

/* title and menu bars */
.titlebar { display: flex; align-items: center; flex: none; height: 20px; background: #fff; }
.logo { width: 16px; height: 16px; margin: 0 5px 0 1px; }
.titlebar h1 { font-size: 13px; line-height: 20px; }
.winbtns { display: flex; margin-left: auto; }
.winbtns button { width: 46px; height: 18px; display: grid; place-items: center; }
.winbtns svg { width: 12px; height: 12px; }
.menubar { display: flex; align-items: center; flex: none; height: 20px; background: #fff; }
.menubar > button { padding: 0 8px 0 7px; height: 20px; line-height: 24px; }
.docicon { width: 16px; height: 12px; margin-left: 6px; }
.mdibtns { display: flex; gap: 1px; margin: 2px 1px 0 auto; }
.mdibtns button { width: 18px; height: 18px; border: 1px solid #e0e0e0; display: grid; place-items: center; }
.mdibtns svg { width: 8px; height: 8px; }

/* toolbars */
.toolbars { padding: 1px 0; background: #f1f1f1; flex: none; }
.toolbar { display: flex; align-items: center; height: 30px; color: #484848; --handle: #e0d820; }
.toolbar > button { flex: none; width: 23px; height: 22px; display: grid; place-items: center; }
.toolbar > button svg { width: 16px; height: 16px; shape-rendering: crispEdges; }
.toolbar > button:disabled { color: #a4a4a4; --handle: #a4a4a4; }
.toolbar > .on { border: 1px solid #0078d7; background: #e3eef9; }
.grip { flex: none; width: 3px; height: 20px; margin: 0 4px 0 10px; background: repeating-linear-gradient(#000 0 1px, transparent 1px 2px); }
.grip.first { margin: 0 3px 0 2px; }
.sep { flex: none; width: 1px; height: 22px; margin: 0 4px 0 3px; background: #b4b4b4; }
.combo { display: flex; height: 20px; background: #fff; border: 1px solid; border-color: #a0a0a0 #e3e3e3 #e3e3e3 #a0a0a0; box-shadow: inset 1px 1px #696969; padding: 2px 1px 1px 2px; margin-top: -3px; }
.combo select { flex: 1; min-width: 0; padding: 0 1px; border: 0; background: none; appearance: none; color: #000; font: 11px/15px "Liberation Mono", monospace; }
.combo span { width: 16px; display: grid; place-items: center; background: #f0f0f0; border: 1px solid; border-color: #e3e3e3 #696969 #696969 #e3e3e3; box-shadow: inset -1px -1px #a0a0a0; }
.combo svg { width: 7px; height: 4px; }
.machines { width: 99px; margin-right: 1px; }
.drawplane { width: 50px; }
.movement { flex: 1; }

/* workspace */
.workspace { flex: 1; min-height: 0; display: grid; grid-template-columns: 334px 289px 1fr; grid-template-rows: 100%; column-gap: 4px; padding-bottom: 3px; border-bottom: 1px solid #a0a0a0; box-shadow: 0 1px #696969; }
.docks { display: flex; flex-direction: column; min-width: 0; min-height: 0; border-right: 1px solid #fff; }
.history { margin-left: 1px; min-height: 0; background: #fff; border: 1px solid; border-color: #a0a0a0 #e3e3e3 #e3e3e3 #a0a0a0; box-shadow: inset 1px 1px #696969; padding: 1px 0 0 5px; overflow: hidden; }
.view3d { min-width: 0; min-height: 0; border: solid; border-width: 2px 1px 1px 2px; border-color: #696969 #e3e3e3 #e3e3e3 #696969; }
.view3d svg { width: 100%; height: 100%; shape-rendering: crispEdges; }
.axis { font: 12px "Liberation Sans", sans-serif; }
.scale { font: 12px "Liberation Sans", sans-serif; text-anchor: middle; }

.panel { flex: 1; display: flex; flex-direction: column; min-height: 0; }
.properties { border-top: 1px solid #696969; padding-top: 2px; box-shadow: 0 -1px #a0a0a0, 0 -5px #fff; }
.caption { display: flex; align-items: center; flex: none; height: 15px; margin: 0 3px 0 2px; padding: 0 2px; border: 1px solid #a0a0a0; border-radius: 2px; box-shadow: inset 1px 1px #fff; }
.caption h2 { flex: 1; font: 11px/13px Roboto, sans-serif; }
.caption button { width: 12px; height: 12px; display: grid; place-items: center; }
.tri { width: 5px; height: 3px; }
.x { width: 6px; height: 6px; }
.tril { width: 3px; height: 5px; }
.tabframe { flex: 1; min-height: 0; display: flex; margin: 4px 7px 0 8px; padding: 3px 4px 2px 2px; border: 1px solid; border-color: #fff #696969 #696969 #fff; box-shadow: inset -1px -1px #a0a0a0; }
.well { flex: 1; min-width: 0; display: flex; flex-direction: column; background: #fff; border: 1px solid; border-color: #a0a0a0 #e3e3e3 #e3e3e3 #a0a0a0; box-shadow: inset 1px 1px #696969; padding: 1px 0 0 1px; }
.tabs { display: flex; flex: none; height: 32px; margin: -1px 7px 0 8px; }
.properties .tabs { height: 26px; }
.tab { align-self: flex-start; height: 18px; padding: 0 7px 0 6px; line-height: 18px; background: #f0f0f0; border: solid; border-width: 0 2px 2px 1px; border-color: #696969 #787878 #787878 #fff; }
.filler { flex: 1; height: 16px; border: solid #787878; border-width: 1px 2px 2px 0; }

/* trees */
.tree li { background: repeating-linear-gradient(#808080 0 1px, transparent 1px 2px) 4px 0 / 1px 100% no-repeat; }
.tree li:last-child { background-size: 1px 10px; }
.tree > li:first-child { background-position: 4px 10px; }
.tree ul { padding-left: 19px; }
.row { display: flex; align-items: center; height: 20px; white-space: nowrap; }
.roomy { padding-left: 4px; }
.roomy .row { height: 22px; }
.tree.roomy > li { background: none; }
.row > svg { width: 16px; height: 16px; shape-rendering: crispEdges; }
.exp { flex: none; width: 9px; height: 9px; border: 1px solid #808080; background: linear-gradient(#000, #000) center / 5px 1px no-repeat, linear-gradient(#000, #000) center / 1px 5px no-repeat, #fff; }
.exp.open { background: linear-gradient(#000, #000) center / 5px 1px no-repeat, #fff; }
.dots { width: 7px; height: 1px; background: repeating-linear-gradient(90deg, #808080 0 1px, transparent 1px 2px); }
.dots.leaf { width: 12px; margin-left: 4px; }
.label { margin-left: 2px; padding: 0 2px; }
.strong { font-weight: bold; }
.shaded { background: #f0f0f0; line-height: 22px; }
.selected { background: #0078d7; color: #fff; outline: 1px dotted #e08030; outline-offset: -1px; }

/* properties table */
.tablewrap { flex: 1; min-height: 0; overflow: hidden; }
table { width: 100%; table-layout: fixed; border-collapse: separate; border-spacing: 0; }
.c-name { width: 116px; }
.c-value { width: 132px; }
.c-unit { width: 44px; }
th, td { height: 20px; padding: 0 2px; font-weight: normal; text-align: left; line-height: 19px; white-space: nowrap; border: solid #c0c0c0; border-width: 0 1px 1px 0; }
th:last-child, td:last-child { border-right: 0; padding: 0 0 0 1px; }
th { text-align: center; background: #f0f0f0; border-color: #696969; box-shadow: inset 1px 1px #fff, inset -1px -1px #a0a0a0; }
th.eval { text-align: left; }
td.mid { text-align: center; }
td input { appearance: none; display: block; width: 15px; height: 15px; margin: 0 auto; background: #fff; border: 1px solid; border-color: #a0a0a0 #e3e3e3 #e3e3e3 #a0a0a0; box-shadow: inset 1px 1px #696969; }
td input:checked::after { content: ""; display: block; width: 3px; height: 6px; margin: 2px 0 0 5px; border: solid #000; border-width: 0 2px 2px 0; rotate: 40deg; }
.swatch { display: block; width: 120px; height: 12px; margin: 0 auto; background: #8484c0; border: 1px solid #000; }
.raised { display: block; width: 127px; height: 16px; line-height: 14px; background: #f0f0f0; border: 1px solid; border-color: #fff #696969 #696969 #fff; box-shadow: inset -1px -1px #a0a0a0; }
.hscroll { display: flex; flex: none; height: 16px; background: #f0f0f0; }
.hscroll button { width: 17px; display: grid; place-items: center; }
.hscroll svg { width: 7px; height: 8px; }
.hscroll button:last-child { margin-left: auto; }
.thumb { width: 220px; background: #cdcdcd; }

/* output docks and status bar */
.output { flex: none; display: grid; grid-template-columns: 963fr 956fr; height: 152px; padding-top: 1px; border-bottom: 1px solid #a0a0a0; }
.outdock { display: flex; gap: 1px; padding: 3px 4px 2px 2px; }
.outdock:first-child { padding-right: 8px; border-right: 1px solid #696969; }
.vcaption { display: flex; flex-direction: column; align-items: center; width: 14px; padding: 2px 0; gap: 1px; border: 1px solid #a0a0a0; border-radius: 2px; }
.vcaption button { width: 12px; height: 12px; display: grid; place-items: center; }
.vcaption h2 { margin-top: auto; font: 11px/12px Roboto, sans-serif; writing-mode: vertical-rl; rotate: 180deg; }
.outwell { flex: 1; margin: 0 0 2px; background: #fff; border: 1px solid; border-color: #a0a0a0 #e3e3e3 #e3e3e3 #a0a0a0; box-shadow: inset 1px 1px #696969; }
.flat { border-color: #828790; box-shadow: none; }
.status { flex: none; display: flex; justify-content: flex-end; gap: 3px; height: 20px; padding-top: 4px; }
.status span { height: 16px; line-height: 14px; border: solid #a0a0a0; border-width: 1px 0 0 1px; }
.cap { width: 29px; }
.num { width: 36px; padding-left: 1px; }
.scrl { width: 34px; }

/* popup menus */
.menu { position: absolute; padding: 2px; border: 1px solid #a0a0a0; background: linear-gradient(90deg, #f0f0f0 23px, #fdfdfd 23px); box-shadow: 4px 4px 3px -1px rgba(0, 0, 0, .5); }
.context { left: 421px; top: 150px; width: 203px; }
.submenu { left: 618px; top: 305px; width: 210px; }
.menu button { display: flex; align-items: center; width: 100%; height: 20px; padding: 0 8px 0 25px; text-align: left; border: 1px solid transparent; }
.menu span { flex: 1; white-space: nowrap; line-height: 18px; }
.menu button:disabled { color: #a0a0a0; }
.menu .hot { background: #b3d6f2; border-color: #0078d7; }
.menu .hot .sub { fill: #fff; }
.menu hr { height: 1px; margin: 2px 0 2px 24px; border: 0; background: #b4b4b4; }
.menu u { text-underline-offset: 2px; }
.mi { width: 16px; height: 16px; margin: 0 8px 0 -24px; opacity: .75; }
.sub { width: 4px; height: 7px; }
```
